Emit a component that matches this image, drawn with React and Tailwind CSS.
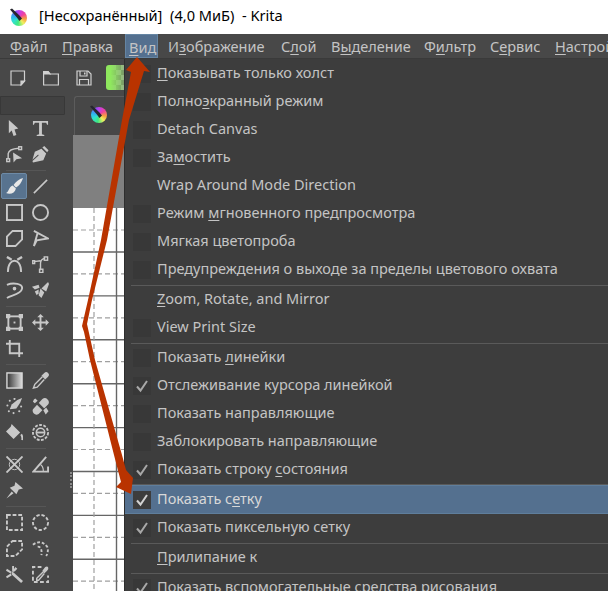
import React from 'react';

const FONT = "font-['Noto_Sans','Open_Sans',sans-serif]";

// "&" marks the mnemonic letter
const Label = ({ text }) => {
  const i = text.indexOf('&');
  if (i < 0) return <span>{text}</span>;
  return (
    <span>
      {text.slice(0, i)}
      <span className="underline underline-offset-2">{text[i + 1]}</span>
      {text.slice(i + 2)}
    </span>
  );
};

const KritaLogo = ({ className }) => (
  <div className={`relative shrink-0 ${className}`}>
    <div className="absolute left-[2px] top-[2px] right-0 bottom-0 rounded-full bg-[conic-gradient(#c040f0_0deg,#f040a0_50deg,#f8a040_100deg,#f0f060_140deg,#40e880_190deg,#30e0d0_240deg,#30b0f0_285deg,#8050f0_330deg,#c040f0_360deg)]" />
    <svg className="absolute inset-0 w-full h-full" viewBox="0 0 18 18">
      <path d="M1 1.5 L3 0.5 L10 7 L13 10.5 L10.5 13 L7.5 9 Z" fill="#26262e" />
    </svg>
  </div>
);

const S = { fill: 'none', stroke: '#c8c8c8', strokeWidth: 1.5 };
const F = { fill: '#c8c8c8' };

const ICONS = {
  select: <path {...F} d="M3 0 L13 9 L9 10 L11 16 L8 17 L6 11 L3 14 Z" />,
  text: <path {...F} d="M1 1 H17 V5 H16 L15 3 H10.5 V15 L13 16 V17 H5 V16 L7.5 15 V3 H3 L2 5 H1 Z" />,
  edit: <g {...S}><rect x="0.8" y="13.5" width="3" height="3" /><rect x="13.5" y="0.8" width="3" height="3" /><path d="M2.3 13.5 V8 Q3 3 13.5 2.3" /><path {...F} stroke="none" d="M7.5 7 L17 13 L11 14 L8 17.5 Z" /></g>,
  pen: <g {...F}><path d="M10 3 L15 8 L12 15 L1 17.5 L0.5 16 L7 10 L6.5 9 L0.5 14.5 L3 6 Z" /><path d="M11 1.5 L13 0 L17.5 4.5 L16 6.5 Z" /></g>,
  brush: <g fill="#e8e8e8"><path d="M18 0 C16 6 13 9 10.5 10 L8 7.5 C10 4 14 1 18 0 Z" /><path d="M7 8 L10.5 11 C9.5 16 5 17.5 0 16 C3 15 2.5 10 7 8 Z" /></g>,
  line: <path {...S} strokeWidth="1.7" d="M2 16 L16 2" />,
  rect: <rect {...S} strokeWidth="2" x="1" y="1" width="16" height="16" />,
  ellipse: <circle {...S} strokeWidth="2" cx="9" cy="9" r="8" />,
  polygon: <path {...S} strokeWidth="2" d="M7 1 H17 V10 L10 17 H1 V7 Z" />,
  polyline: <path {...S} strokeWidth="2" d="M2 1 L17 9 L5 11 L2 17 L6 3" />,
  bezier: <g {...S}><path d="M2 17 C2 8 6 5 9 5 C12 5 16 8 16 17" strokeWidth="2" /><path d="M1 1 L6 4 M17 1 L12 4" strokeWidth="2.5" /></g>,
  freepath: <g {...S}><path d="M9 15 V8 Q9 3 14 2.5 M9 5 L2 6" strokeWidth="1.5" /><rect x="13" y="1" width="3.5" height="3.5" /><rect x="8" y="14" width="3.5" height="3.5" /><rect x="0.8" y="5" width="2" height="3" /></g>,
  dyna: <g {...S}><path d="M1 3 C8 0 18 2 17 7 C16 13 6 14 1 17" strokeWidth="2" /><circle cx="9" cy="7" r="1.2" {...F} /></g>,
  multi: <g {...F}><path d="M17 0 L18 2 L15 10 L10 7 Z" /><path d="M9 7 L13 11 L10 17 L7 14 Z" /><path d="M0 5 L7 3 L8 6 L3 8 Z" /><path d="M3 10 L7 8 L7 12 L5 14 Z" /></g>,
  transform: <g {...S} strokeWidth="2"><rect x="2.5" y="2.5" width="13" height="13" /><rect x="0" y="0" width="3.5" height="3.5" {...F} /><rect x="14.5" y="0" width="3.5" height="3.5" {...F} /><rect x="0" y="14.5" width="3.5" height="3.5" {...F} /><rect x="14.5" y="14.5" width="3.5" height="3.5" {...F} /><rect x="8" y="8" width="2" height="2" {...F} stroke="none" /></g>,
  move: <g><path {...S} strokeWidth="2" d="M9 2 V16 M2 9 H16" /><path {...F} d="M9 0 L12.5 3.5 H5.5 Z M9 18 L5.5 14.5 H12.5 Z M0 9 L3.5 5.5 V12.5 Z M18 9 L14.5 12.5 V5.5 Z" /></g>,
  crop: <path {...S} strokeWidth="2" d="M0 4 H14 V18 M4 0 V14 H18" />,
  gradient: <g><rect x="1" y="1" width="16" height="16" fill="url(#gr)" stroke="#d8d8d8" strokeWidth="1.5" /><defs><linearGradient id="gr"><stop offset="0" stopColor="#333" /><stop offset="1" stopColor="#ddd" /></linearGradient></defs></g>,
  picker: <g><path {...S} d="M11 5 L3 13 L1.5 17 L5.5 16 L13 8" /><path {...F} d="M10 4 L13 1 Q15 -1 17 1 Q19 3 17 5 L14 8 Z" /></g>,
  colorize: <g {...F}><path d="M6 7 L12 2 L17 0 L15 5 L11 11 L4 12 Z" /><circle cx="1.5" cy="8" r="1.1" /><circle cx="4" cy="3" r="1.1" /><circle cx="9" cy="1" r="1.1" /><circle cx="16" cy="9" r="1.1" /><circle cx="14" cy="14" r="1.1" /><circle cx="8" cy="16" r="1.1" /><circle cx="3" cy="14" r="1.1" /></g>,
  patch: <g {...F}><path d="M1 12 L11 1 Q14 -1 16.5 1.5 Q19 4 17 7 L7 17 Q4 18.5 2 16.5 Q0 14 1 12 Z" /><path fill="#484848" d="M1 3 L3 1 L17 15 L15 17 Z" /><path d="M2 1.5 L3.5 0.5 L6 3 L3 5.5 L1 4 Z M12 13 L15 10 L17.5 14 L14.5 17.5 Z" /></g>,
  fill: <g><path {...F} d="M6 0 L8 2 L15 9 L8 16 L0 8 L5 3 Z" /><path {...S} strokeWidth="2" d="M16 11 Q18 14 17 17" /></g>,
  enclose: <g {...S}><circle cx="9" cy="9" r="8" strokeWidth="2" strokeDasharray="3 1.5" /><circle cx="9" cy="9" r="4.5" /><path d="M4.5 9 H13.5" strokeWidth="2" /></g>,
  assistant: <g {...S} strokeWidth="2"><path d="M0.5 0.5 L17.5 17.5 M17.5 0.5 L0.5 17.5" /><circle cx="9" cy="9" r="5.5" strokeWidth="1" /></g>,
  measure: <g {...S} strokeWidth="2"><path d="M15 1 L1.5 16.5 H17 V11" /><path d="M9 9 Q12 11 12 16" strokeWidth="1.2" /></g>,
  pin: <g {...F}><path d="M10 0 L18 7 L13.5 8 L11 13 L4 6 L9 4 Z" /><path d="M6 10 L0.5 17.5 L8 12 Z" /></g>,
  selrect: <rect {...S} strokeWidth="2" strokeDasharray="4 2" x="1" y="1" width="16" height="16" />,
  selell: <circle {...S} strokeWidth="2" strokeDasharray="3.5 2" cx="9" cy="9" r="8" />,
  selpoly: <path {...S} strokeWidth="2" strokeDasharray="4 2" d="M7 1 H17 V10 L10 17 H1 V7 Z" />,
  selfree: <g {...S} strokeWidth="2" strokeDasharray="3 2"><path d="M1 5 Q9 -1 16 7 Q18 12 15 17" /><path d="M6 7 Q11 7 10 16" /></g>,
  wand: <g {...F}><path d="M6 6 L8 7 L18 16 L16 18 L6 9 Z" /><path d="M6.5 0 H8.5 V6 H6.5 Z M0 5 L1 3 L6 6 L5 8 Z M0 11 L5 8 L6 10 L1 13 Z M10 1 L12 3 L9 6 L8 4 Z" /></g>,
  selpick: <g><path {...S} strokeWidth="2" strokeDasharray="4 2.5" d="M10 1 H1 V17 H17 V10" /><path {...S} d="M12 6 L5 13 L5 15 L7 15 L13 8" /><path {...F} d="M11 5 L14 1 Q16 0 17 1 Q18 3 16 5 L13 8 Z" /></g>,
};

const TOOL_GROUPS = [
  [['select', 'text'], ['edit', 'pen']],
  [['brush', 'line'], ['rect', 'ellipse'], ['polygon', 'polyline'], ['bezier', 'freepath'], ['dyna', 'multi']],
  [['transform', 'move'], ['crop']],
  [['gradient', 'picker'], ['colorize', 'patch'], ['fill', 'enclose']],
  [['assistant', 'measure'], ['pin']],
  [['selrect', 'selell'], ['selpoly', 'selfree'], ['wand', 'selpick']],
];

const Tool = ({ name }) => (
  <div className={`w-[26px] h-[26px] flex items-center justify-center rounded-[2px] ${name === 'brush' ? 'bg-[#58738f] border border-[#6d8aa6]' : ''}`}>
    <svg width="17" height="17" viewBox="0 0 18 18">{ICONS[name]}</svg>
  </div>
);

const Toolbox = () => (
  <div className="relative w-[73px] h-full bg-[#484848] flex flex-col shrink-0">
    <div className="h-[19px] w-[65px] bg-[#414141] border border-[#383838] rounded-r-[1px] shrink-0" />
    {TOOL_GROUPS.map((group, g) => (
      <div key={g} className="flex flex-col">
        {g > 0 && (
          <div className="h-[6px] flex items-center">
            <div className="ml-[6px] w-[40px] h-px bg-[#565656]" />
          </div>
        )}
        {group.map((row, r) => (
          <div key={r} className="flex pl-px">
            {row.map((name) => <Tool key={name} name={name} />)}
          </div>
        ))}
      </div>
    ))}
    <div className="absolute left-[70px] top-[376px] w-[2px] h-[16px] border-l-2 border-dotted border-[#8a8a8a]" />
  </div>
);

const Canvas = () => (
  <div className="flex-1 flex flex-col min-w-0">
    <div className="h-[39px] shrink-0 bg-[#484848] pl-px">
      <div className="h-full bg-[#474747] border-l border-t border-[#5c5c5c] rounded-tl-[3px] pl-[14px] pt-[8px]">
        <KritaLogo className="w-[18px] h-[18px]" />
      </div>
    </div>
    <div className="h-[73px] shrink-0 bg-[#808080]" />
    <svg className="flex-1 bg-white" width="51" height="383" viewBox="0 0 51 383">
      {[0, 1, 2, 3, 4, 5, 6, 7, 8].map((i) => (
        <g key={i}>
          <line x1="0" x2="51" y1={44 + i * 43.9} y2={44 + i * 43.9} stroke="#666" strokeWidth="1.4" />
          <line x1="0" x2="51" y1={22 + i * 43.9} y2={22 + i * 43.9} stroke="#a0a0a0" strokeWidth="1.2" strokeDasharray="5 3" />
        </g>
      ))}
      <line x1="21" x2="21" y1="0" y2="383" stroke="#a0a0a0" strokeWidth="1.2" strokeDasharray="5 3" />
      <line x1="43.5" x2="43.5" y1="0" y2="383" stroke="#666" strokeWidth="1.4" />
    </svg>
  </div>
);

const DocIcon = ({ children }) => (
  <div className="w-[33px] flex items-center justify-center">
    <svg width="16" height="16" viewBox="0 0 16 16" fill="none" stroke="#d0d0d0" strokeWidth="1.2">{children}</svg>
  </div>
);

const TopToolbar = () => (
  <div className="h-[37px] shrink-0 bg-[#484848] flex items-center pl-[2px]">
    <DocIcon>
      <path d="M1 1 H14.5 V11 L11 15 H1 Z" />
      <path d="M11 15 V11 H14.5 Z" fill="#d0d0d0" />
    </DocIcon>
    <DocIcon>
      <path d="M0.6 4 V15 H15.4 V4 H7 L5 1.5 H0.6 Z" />
      <path d="M0.6 4 H7 L5 1.5 H0.6 Z" fill="#d0d0d0" />
    </DocIcon>
    <DocIcon>
      <path d="M1 1 H12 L15 4 V15 H1 Z" />
      <path d="M4 1 V6 H11 V1 M3.5 15 V9.5 H12.5 V15" />
      <rect x="8" y="2.5" width="1.5" height="2" fill="#d0d0d0" stroke="none" />
    </DocIcon>
    <div className="ml-[6px] w-[18px] h-[25px] rounded-l-[3px] bg-[linear-gradient(90deg,#8fe85e_0%,#8fe85e_25%,rgba(143,232,94,0.35)_100%),conic-gradient(#9a9a9a_25%,#6e6e6e_0_50%,#9a9a9a_0_75%,#6e6e6e_0)] bg-[size:100%_100%,10px_10px]" />
  </div>
);

const MENU_BAR = [
  ['&Файл', 'ml-[6px] w-[52px] px-[4px]'],
  ['&Правка', 'w-[67px] px-[4px]'],
  ['&Вид', 'w-[33px] px-[3px] bg-[#54708f] border border-[#6585a3]'],
  ['И&зображение', 'ml-[6px] w-[113px] px-[4px]'],
  ['С&лой', 'w-[50px] px-[4px]'],
  ['В&ыделение', 'w-[93px] px-[4px]'],
  ['Ф&ильтр', 'w-[66px] px-[4px]'],
  ['С&ервис', 'w-[65px] px-[4px]'],
  ['&Настройки', 'w-[90px] px-[4px]'],
];

const MenuBar = () => (
  <div className="h-[25px] shrink-0 bg-[#484848] border-b border-[#3a3a3a] flex items-stretch text-[#c4c4c4] text-[14.5px] leading-[24px]">
    {MENU_BAR.map(([t, cls]) => (
      <div key={t} className={`shrink-0 whitespace-nowrap ${cls}`}><Label text={t} /></div>
    ))}
  </div>
);

const Check = ({ bright }) => (
  <svg width="14" height="14" viewBox="0 0 14 14" fill="none" stroke={bright ? '#d2d2d2' : '#a8a8a8'} strokeWidth="2">
    <path d="M2 7.5 L5.5 11.5 L12 2" />
  </svg>
);

const Row = ({ label, box, checked, active }) => (
  <div className={`flex items-center shrink-0 pl-[8px] ${active ? 'h-[29px] bg-[#54708f] border-y border-[#5f7e9c] text-[#d8d8d8]' : 'h-[28px] text-[#c4c4c4]'}`}>
    <div className={`w-[18px] h-[18px] flex items-center justify-center ${box ? (active ? 'bg-[#3d3d3d]' : 'bg-[#383838]') : ''}`}>
      {checked && <Check bright={active} />}
    </div>
    <div className="ml-[6px] pb-[2px] whitespace-nowrap text-[14.5px]"><Label text={label} /></div>
  </div>
);

const Sep = ({ tall }) => (
  <div className={`flex items-center shrink-0 pl-[6px] ${tall ? 'h-[2px]' : 'h-px'}`}>
    <div className="w-full h-px bg-[#5a5a5a]" />
  </div>
);

const ViewMenu = () => (
  <div className="flex-1 min-w-0 bg-[#3d3d3d] border-l border-[#2e2e2e] pt-px flex flex-col overflow-hidden">
    <Row box label="&Показывать только холст" />
    <Row box label="Полно&экранный режим" />
    <Row box label="Detach Canvas" />
    <Row box label="За&мостить" />
    <Row label="Wrap Around Mode Direction" />
    <Row box label="Режим &мгновенного предпросмотра" />
    <Row box label="Мягкая цветопроба" />
    <Row box label="Предупреждения о выходе за пределы цветового охвата" />
    <Sep tall />
    <Row label="&Zoom, Rotate, and Mirror" />
    <Row box label="View Print Size" />
    <Sep tall />
    <Row box label="Показать &линейки" />
    <Row box checked label="Отслеживание курсора линейкой" />
    <Row box label="Показать направляющие" />
    <Row box label="Заблокировать направляющие" />
    <Row box checked label="Показать строку &состояния" />
    <Sep />
    <Row box checked active label="Показать с&етку" />
    <Row box checked label="Показать пиксельную сетку" />
    <Sep tall />
    <Row label="&Прилипание к" />
    <Sep tall />
    <Row box checked label="Показать вспомогательные средства рисования" />
  </div>
);

const Arrows = () => (
  <svg className="absolute left-0 top-0 pointer-events-none" width="608" height="591" viewBox="0 0 608 591">
    <polygon
      fill="#b93300"
      points="137,57 150,72 144,71 129,120 107,240 92,300 87,324 95,360 122,455 126,470 133,478 131,494 116,487 121,482 114,455 90,360 84,332 82,326 88,300 101,240 122,120 131,72 126,70"
    />
  </svg>
);

export default function App() {
  return (
    <div className={`relative w-[608px] h-[591px] overflow-hidden bg-[#484848] flex flex-col ${FONT}`}>
      <div className="h-[34px] shrink-0 bg-white flex items-center pl-[9px] text-[14.6px] text-black whitespace-pre">
        <KritaLogo className="w-[18px] h-[18px]" />
        <span className="ml-[12px] pb-[2px]">[Несохранённый]  (4,0 МиБ)  - Krita</span>
      </div>
      <MenuBar />
      <div className="flex-1 flex min-h-0">
        <div className="w-[124px] shrink-0 flex flex-col">
          <TopToolbar />
          <div className="flex-1 flex min-h-0">
            <Toolbox />
            <Canvas />
          </div>
        </div>
        <ViewMenu />
      </div>
      <Arrows />
    </div>
  );
}
